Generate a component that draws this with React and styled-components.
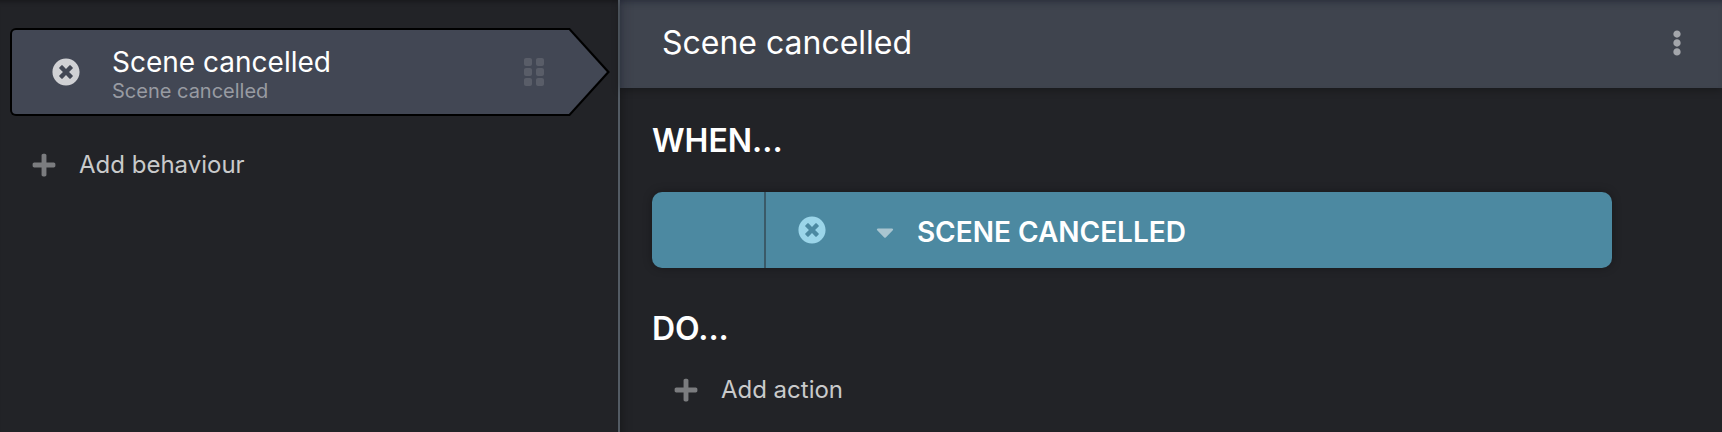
import React, { useState } from "react";
import styled, { createGlobalStyle } from "styled-components";
import {
  FaTimesCircle,
  FaGripVertical,
  FaPlus,
  FaEllipsisV,
  FaCaretDown
} from "react-icons/fa";

const GlobalStyle = createGlobalStyle`
  * {
    box-sizing: border-box;
  }

  body {
    margin: 0;
    background: #222327;
    color: #ffffff;
    font-family: Inter, "Liberation Sans", sans-serif;
    font-weight: 400;
  }

  button {
    padding: 0;
    border: 0;
    background: none;
    color: inherit;
    font: inherit;
    text-align: left;
    cursor: pointer;
  }
`;

const Page = styled.div`
  display: flex;
  min-height: 100vh;
`;

const Sidebar = styled.aside`
  flex: 0 0 36%;
  padding: 28px 8px 0 10px;
  border-right: 2px solid #535b64;
  box-shadow: inset 0 6px 4px -4px rgba(0, 0, 0, 0.3);
`;

const arrow = indent => `polygon(
  0 0,
  calc(100% - ${indent}px) 0,
  100% 50%,
  calc(100% - ${indent}px) 100%,
  0 100%
)`;

const CardOutline = styled.div`
  padding: 2px 3px 2px 2px;
  border-radius: 6px;
  background: #000000;
  clip-path: ${arrow(40)};
`;

const Card = styled.div`
  display: flex;
  align-items: center;
  height: 84px;
  padding: 0 57px 0 40px;
  border-radius: 4px;
  background: #424754;
  clip-path: ${arrow(38)};
`;

const CardButton = styled.button`
  display: flex;
  flex: 1;
  align-items: center;
  gap: 32px;
`;

const CardText = styled.span`
  padding-top: 6px;
`;

const CardTitle = styled.span`
  display: block;
  font-size: 28px;
  line-height: 32px;
`;

const CardSubtitle = styled.span`
  display: block;
  color: #989ba2;
  font-size: 20px;
  line-height: 26px;
`;

const Icon = styled.span`
  display: flex;
  color: ${props => props.color};
  font-size: ${props => props.size}px;
`;

const AddButton = styled.button`
  display: flex;
  align-items: center;
  gap: 22px;
  margin: ${props => props.margin};
  color: #c9cacb;
  font-size: 24px;
  line-height: 32px;
`;

const Main = styled.main`
  flex: 1;
  min-width: 0;
  box-shadow: inset 12px 0 12px -12px rgba(0, 0, 0, 0.4);
`;

const Header = styled.header`
  display: flex;
  align-items: center;
  justify-content: space-between;
  height: 88px;
  padding: 0 32px 2px 42px;
  background: #3f444e;
  box-shadow: inset 12px 0 12px -12px rgba(24, 28, 44, 0.5),
    inset 0 6px 6px -4px rgba(24, 28, 44, 0.5), 0 2px 8px rgba(0, 0, 0, 0.3);
`;

const Title = styled.h1`
  margin: 0;
  font-size: 32px;
  font-weight: 400;
  line-height: 40px;
`;

const Content = styled.div`
  padding: 33px 110px 0 32px;
`;

const Heading = styled.h2`
  margin: 0;
  font-size: 32px;
  font-weight: 600;
  line-height: 40px;
`;

const Trigger = styled.div`
  display: flex;
  height: 76px;
  margin: 31px 0 41px;
  border-radius: 10px;
  background: #4c89a1;
  box-shadow: 0 0 10px rgba(0, 0, 0, 0.3);
`;

const TriggerHandle = styled.div`
  width: 114px;
  border-right: 2px solid #3a5a68;
`;

const TriggerBody = styled.div`
  display: flex;
  flex: 1;
  align-items: center;
  padding: 0 32px;
  gap: 45px;
`;

const TriggerSelect = styled.button`
  display: flex;
  align-items: center;
  gap: 18px;
  padding-top: 3px;
  font-size: 28px;
  font-weight: 600;
  line-height: 36px;
  text-transform: uppercase;
`;

function AddItem({ label, margin, onClick }) {
  return (
    <AddButton type="button" margin={margin} onClick={onClick}>
      <Icon color="#7b7c7f" size={26}>
        <FaPlus />
      </Icon>
      {label}
    </AddButton>
  );
}

function BehaviourCard({ title, subtitle, onSelect }) {
  return (
    <CardOutline>
      <Card>
        <CardButton type="button" onClick={onSelect}>
          <Icon color="#d0d1d4" size={28}>
            <FaTimesCircle />
          </Icon>
          <CardText>
            <CardTitle>{title}</CardTitle>
            <CardSubtitle>{subtitle}</CardSubtitle>
          </CardText>
        </CardButton>
        <Icon color="#595d68" size={32}>
          <FaGripVertical />
        </Icon>
      </Card>
    </CardOutline>
  );
}

function App() {
  const [behaviour] = useState("Scene cancelled");

  return (
    <>
      <GlobalStyle />
      <Page>
        <Sidebar>
          <BehaviourCard title={behaviour} subtitle={behaviour} />
          <AddItem label="Add behaviour" margin="33px 0 0 21px" />
        </Sidebar>
        <Main>
          <Header>
            <Title>{behaviour}</Title>
            <button type="button" aria-label="More options">
              <Icon color="#a3a6ab" size={26}>
                <FaEllipsisV />
              </Icon>
            </button>
          </Header>
          <Content>
            <Heading>WHEN...</Heading>
            <Trigger>
              <TriggerHandle />
              <TriggerBody>
                <Icon color="#9bd5e9" size={28}>
                  <FaTimesCircle />
                </Icon>
                <TriggerSelect type="button">
                  <Icon color="#a9c5d0" size={28}>
                    <FaCaretDown />
                  </Icon>
                  {behaviour}
                </TriggerSelect>
              </TriggerBody>
            </Trigger>
            <Heading>DO...</Heading>
            <AddItem label="Add action" margin="25px 0 0 21px" />
          </Content>
        </Main>
      </Page>
    </>
  );
}

export default App;
